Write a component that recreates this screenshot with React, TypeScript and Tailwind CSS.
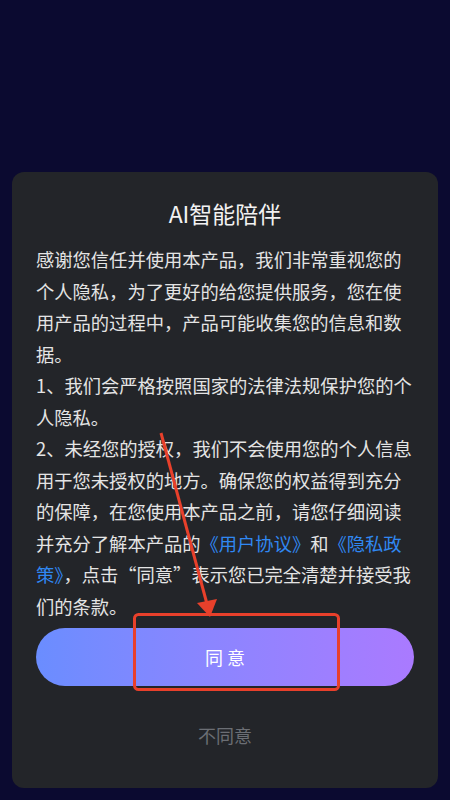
export default function App() {
  const font = { fontFamily: '"Noto Sans CJK SC", "Noto Sans", sans-serif' };

  return (
    <div className="relative h-[800px] w-[450px] overflow-hidden bg-[#0b0a30]" style={font}>
      <div className="flex h-full flex-col justify-end px-3 pb-3">
        <div className="rounded-xl bg-[#232529] px-6 pt-[26px] pb-[41px]">
          <h1 className="text-center text-[23px] leading-[30px] font-normal text-[#f2f2f2]">AI智能陪伴</h1>

          <div className="mt-[16px] text-[18.3px] leading-[31.5px] text-[#e4e4e4]">
            <p>感谢您信任并使用本产品，我们非常重视您的个人隐私，为了更好的给您提供服务，您在使用产品的过程中，产品可能收集您的信息和数据。</p>
            <p>1、我们会严格按照国家的法律法规保护您的个人隐私。</p>
            <p>
              2、未经您的授权，我们不会使用您的个人信息用于您未授权的地方。确保您的权益得到充分的保障，在您使用本产品之前，请您仔细阅读并充分了解本产品的
              <span className="text-[#3088f2]">《用户协议》</span>和
              <span className="text-[#3088f2]">《隐私政策》</span>，点击“同意”表示您已完全清楚并接受我们的条款。
            </p>
          </div>

          <button className="mt-[6px] flex h-[58px] w-full items-center justify-center rounded-full bg-gradient-to-r from-[#6a8dff] to-[#aa7aff] text-[18px] text-white">
            同 意
          </button>

          <div className="mt-[37px] text-center text-[18px] leading-[24px] text-[#6b6e74]">不同意</div>
        </div>
      </div>

      {/* annotation overlay */}
      <svg className="pointer-events-none absolute inset-0" width="450" height="800" viewBox="0 0 450 800">
        <rect x="134.5" y="614.5" width="204" height="75" rx="4" fill="none" stroke="#e8402b" strokeWidth="3" />
        <line x1="161" y1="433" x2="207" y2="604" stroke="#e8402b" strokeWidth="3" />
        <polygon points="197,603 217,599 210,617" fill="#e8402b" />
      </svg>
    </div>
  );
}
